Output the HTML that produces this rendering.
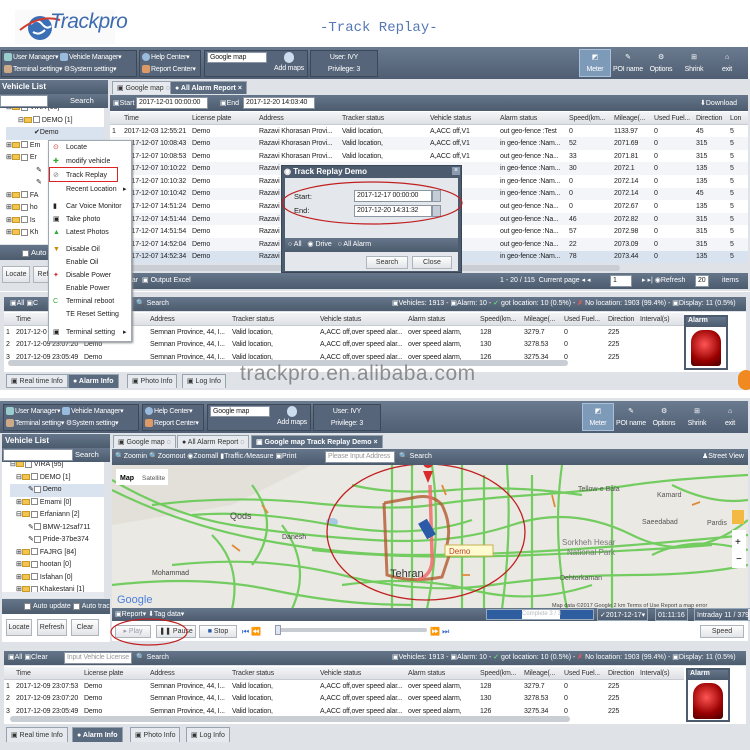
<!DOCTYPE html>
<html><head><meta charset="utf-8"><style>
*{box-sizing:border-box;margin:0;padding:0}
body{width:750px;height:750px;overflow:hidden;background:#fff;font-family:"Liberation Sans",sans-serif;font-size:8px;color:#222;position:relative}
.a{position:absolute}
.dk{background:linear-gradient(#66768a,#4c5b6e);color:#fff;white-space:nowrap}
.tb{background:linear-gradient(#6b7b8f,#4f5e72)}
.grp{position:absolute;border:1px solid #3b4858;background:#56657a;color:#fff;font-size:7px;line-height:12px;padding:1px 2px;white-space:nowrap;overflow:hidden;letter-spacing:-0.2px}
.ib{position:absolute;color:#fff;font-size:7px;text-align:center;white-space:nowrap;letter-spacing:-0.2px}
.hd{background:linear-gradient(#f4f5f7,#dde0e5);color:#333;border-bottom:1px solid #c8ccd2}
table{border-collapse:collapse;table-layout:fixed;position:absolute;font-size:7px;letter-spacing:-0.15px}
td{white-space:nowrap;overflow:hidden;padding:0 2px;height:12.6px}
.alt{background:#f3f5f8}
.sel{background:#d9e3ef}
.tab{position:absolute;height:13px;font-size:7px;line-height:13px;padding:0 4px;border:1px solid #98a3b0;border-bottom:none;background:#e6e9ed;color:#333;white-space:nowrap}
.tab.on{background:#5a6b80;color:#fff;font-weight:bold}
.btn{position:absolute;background:linear-gradient(#fdfdfd,#e2e4e8);border:1px solid #aeb4bc;font-size:7px;text-align:center;line-height:14px;color:#333;white-space:nowrap}
.inp{position:absolute;background:#fff;border:1px solid #8c96a2;font-size:7px;line-height:10px;padding-left:2px;color:#222;white-space:nowrap;overflow:hidden;letter-spacing:-0.2px}
.tree div{height:12.5px;line-height:12.5px;white-space:nowrap;font-size:7px}
.fd{display:inline-block;width:8px;height:6px;background:#f1c550;border:1px solid #c99a2a;vertical-align:middle;margin-right:1px}
.cb{display:inline-block;width:7px;height:7px;border:1px solid #888;background:#fff;vertical-align:middle;margin-right:2px}
.mi{height:13px;line-height:13px;padding-left:17px;font-size:7px;position:relative;white-space:nowrap}
.ic{display:inline-block;width:8px;height:8px;border-radius:2px;vertical-align:middle;margin-right:1px}
</style></head><body>

<!-- ===== TOP HALF ===== -->
<div class="a" style="left:15px;top:10px;width:100px;height:34px;background:#fafafa"></div>
<svg class="a" style="left:16px;top:10px" width="46" height="34"><ellipse cx="24" cy="18" rx="12" ry="12" fill="#3a6fb5"/><path d="M15 14q6-6 11 0t9 2M17 22q6 4 12-2" stroke="#fff" stroke-width="2" fill="none"/><path d="M4 20q20-16 40-10" stroke="#d23b2f" stroke-width="2" fill="none"/></svg>
<div class="a" style="left:50px;top:10px;font-size:21px;font-style:italic;color:#3d6bb0;letter-spacing:-0.5px">Trackpro</div>
<div class="a" style="left:320px;top:20px;font-size:14px;font-family:'Liberation Mono',monospace;color:#5578b5">-Track Replay-</div>

<div class="a tb" style="left:0;top:47px;width:748px;height:32px"></div>
<div class="grp" style="left:1px;top:50px;width:136px;height:27px"><span class="ic" style="background:#9cc"></span>User Manager▾ <span class="ic" style="background:#9bd"></span>Vehicle Manager▾<br><span class="ic" style="background:#ca8"></span>Terminal setting▾ ⚙System setting▾</div>
<div class="grp" style="left:139px;top:50px;width:62px;height:27px"><span class="ic" style="background:#9bd;border-radius:4px"></span>Help Center▾<br><span class="ic" style="background:#d96"></span>Report Center▾</div>
<div class="grp" style="left:204px;top:50px;width:104px;height:27px"></div>
<div class="inp" style="left:207px;top:52px;width:60px;height:11px">Google map</div>
<div class="a" style="left:284px;top:52px;width:10px;height:11px;border-radius:5px;background:#cde"></div>
<div class="ib" style="left:270px;top:65px;width:38px">Add maps</div>
<div class="grp" style="left:310px;top:50px;width:68px;height:27px;text-align:center">User: IVY<br>Privilege: 3</div>
<div class="a" style="left:579px;top:49px;width:32px;height:28px;background:#7d9ab8;border:1px solid #a8c0da"></div>
<div class="ib" style="left:579px;top:52px;width:32px;line-height:12px">◩<br>Meter</div>
<div class="ib" style="left:612px;top:52px;width:32px;line-height:12px">✎<br>POI name</div>
<div class="ib" style="left:646px;top:52px;width:30px;line-height:12px">⚙<br>Options</div>
<div class="ib" style="left:678px;top:52px;width:32px;line-height:12px">⊞<br>Shrink</div>
<div class="ib" style="left:712px;top:52px;width:30px;line-height:12px">⌂<br>exit</div>

<!-- left panel -->
<div class="a" style="left:0;top:79px;width:110px;height:212px;background:#dfe3e8"></div>
<div class="a dk" style="left:0;top:80px;width:108px;height:14px;font-weight:bold;line-height:14px;padding-left:2px;font-size:8px">Vehicle List</div>
<div class="a dk" style="left:0;top:94px;width:108px;height:14px"></div>
<div class="inp" style="left:0;top:95px;width:48px;height:12px"></div>
<div class="a" style="left:70px;top:96px;color:#fff;font-size:7.5px">Search</div>
<div class="a tree" style="left:0;top:108px;width:104px;height:136px;background:#fff;overflow:hidden;padding-left:6px">
<div style="margin-top:-6px">⊟<span class="fd"></span><span class="cb"></span>VIRA [95]</div>
<div style="padding-left:12px">⊟<span class="fd"></span><span class="cb"></span>DEMO [1]</div>
<div style="padding-left:28px;background:#d9e3ef">✔Demo</div>
<div>⊞<span class="fd"></span><span class="cb"></span>Em</div><div>⊞<span class="fd"></span><span class="cb"></span>Er</div>
<div style="padding-left:30px">✎</div><div style="padding-left:30px">✎</div>
<div>⊞<span class="fd"></span><span class="cb"></span>FA</div><div>⊞<span class="fd"></span><span class="cb"></span>ho</div><div>⊞<span class="fd"></span><span class="cb"></span>Is</div><div>⊞<span class="fd"></span><span class="cb"></span>Kh</div>
</div>
<div class="a dk" style="left:0;top:245px;width:108px;height:15px;font-size:7.5px;line-height:15px;padding-left:22px"><span class="cb"></span>Auto</div>
<div class="btn" style="left:2px;top:266px;width:28px;height:17px;line-height:16px">Locate</div>
<div class="btn" style="left:33px;top:266px;width:20px;height:17px;line-height:16px">Ref</div>

<!-- right area -->
<div class="a" style="left:110px;top:79px;width:640px;height:212px;background:#dfe3e8"></div>
<div class="tab" style="left:112px;top:81px">▣ Google map ◌</div>
<div class="tab on" style="left:170px;top:81px">● All Alarm Report ×</div>
<div class="a dk" style="left:110px;top:95px;width:638px;height:16px"></div>
<div class="a" style="left:113px;top:99px;color:#fff;font-size:7px">▣Start</div>
<div class="inp" style="left:136px;top:97px;width:72px;height:12px">2017-12-01 00:00:00</div>
<div class="a" style="left:220px;top:99px;color:#fff;font-size:7px">▣End</div>
<div class="inp" style="left:243px;top:97px;width:72px;height:12px">2017-12-20 14:03:40</div>
<div class="a" style="left:700px;top:99px;color:#fff;font-size:7px">⬇Download</div>
<div class="a" style="left:110px;top:111px;width:638px;height:152px;background:#fff"></div>
<table style="left:110px;top:112px;width:638px">
<colgroup><col style="width:12px"><col style="width:68px"><col style="width:67px"><col style="width:83px"><col style="width:88px"><col style="width:70px"><col style="width:69px"><col style="width:45px"><col style="width:40px"><col style="width:42px"><col style="width:34px"><col style="width:20px"></colgroup>
<tr class="hd"><td></td><td>Time</td><td>License plate</td><td>Address</td><td>Tracker status</td><td>Vehicle status</td><td>Alarm status</td><td>Speed(km...</td><td>Mileage(...</td><td>Used Fuel...</td><td>Direction</td><td>Lon</td></tr>
<tr><td>1</td><td>2017-12-03 12:55:21</td><td>Demo</td><td>Razavi Khorasan Provi...</td><td>Valid location,</td><td>A,ACC off,V1</td><td>out geo-fence :Test</td><td>0</td><td>1133.97</td><td>0</td><td>45</td><td>5</td></tr>
<tr class="alt"><td>2</td><td>2017-12-07 10:08:43</td><td>Demo</td><td>Razavi Khorasan Provi...</td><td>Valid location,</td><td>A,ACC off,V1</td><td>in geo-fence :Nam...</td><td>52</td><td>2071.69</td><td>0</td><td>315</td><td>5</td></tr>
<tr><td>3</td><td>2017-12-07 10:08:53</td><td>Demo</td><td>Razavi Khorasan Provi...</td><td>Valid location,</td><td>A,ACC off,V1</td><td>out geo-fence :Na...</td><td>33</td><td>2071.81</td><td>0</td><td>315</td><td>5</td></tr>
<tr class="alt"><td>4</td><td>2017-12-07 10:10:22</td><td>Demo</td><td>Razavi</td><td></td><td>,V1</td><td>in geo-fence :Nam...</td><td>30</td><td>2072.1</td><td>0</td><td>135</td><td>5</td></tr>
<tr><td>5</td><td>2017-12-07 10:10:32</td><td>Demo</td><td>Razavi</td><td></td><td>,V1</td><td>in geo-fence :Nam...</td><td>0</td><td>2072.14</td><td>0</td><td>135</td><td>5</td></tr>
<tr class="alt"><td>6</td><td>2017-12-07 10:10:42</td><td>Demo</td><td>Razavi</td><td></td><td>,V1</td><td>in geo-fence :Nam...</td><td>0</td><td>2072.14</td><td>0</td><td>45</td><td>5</td></tr>
<tr><td>7</td><td>2017-12-07 14:51:24</td><td>Demo</td><td>Razavi</td><td></td><td>,V1</td><td>out geo-fence :Na...</td><td>0</td><td>2072.67</td><td>0</td><td>135</td><td>5</td></tr>
<tr class="alt"><td>8</td><td>2017-12-07 14:51:44</td><td>Demo</td><td>Razavi</td><td></td><td>,V1</td><td>out geo-fence :Na...</td><td>46</td><td>2072.82</td><td>0</td><td>315</td><td>5</td></tr>
<tr><td>9</td><td>2017-12-07 14:51:54</td><td>Demo</td><td>Razavi</td><td></td><td>,V1</td><td>out geo-fence :Na...</td><td>57</td><td>2072.98</td><td>0</td><td>315</td><td>5</td></tr>
<tr class="alt"><td>10</td><td>2017-12-07 14:52:04</td><td>Demo</td><td>Razavi</td><td></td><td>,V1</td><td>out geo-fence :Na...</td><td>22</td><td>2073.09</td><td>0</td><td>315</td><td>5</td></tr>
<tr class="sel"><td>11</td><td>2017-12-07 14:52:34</td><td>Demo</td><td>Razavi</td><td></td><td>,V1</td><td>in geo-fence :Nam...</td><td>78</td><td>2073.44</td><td>0</td><td>135</td><td>5</td></tr>
</table>
<div class="a" style="left:130px;top:265px;width:490px;height:6px;background:#c9ced5;border-radius:3px"></div>
<div class="a dk" style="left:110px;top:273px;width:638px;height:16px;font-size:7px;line-height:16px">
<span style="position:absolute;left:18px">ear &nbsp;▣ Output Excel</span>
<span style="position:absolute;left:390px">1 - 20 / 115 &nbsp;Current page ◂ ◂</span>
<span class="inp" style="left:500px;top:2px;width:22px;height:12px">1</span>
<span style="position:absolute;left:532px">▸ ▸| ◉Refresh</span>
<span class="inp" style="left:585px;top:2px;width:14px;height:12px">20</span>
<span style="position:absolute;left:612px">items</span></div>

<!-- lower grid top -->
<div class="a" style="left:0;top:292px;width:750px;height:98px;background:#dfe3e8"></div>
<div class="a dk" style="left:4px;top:297px;width:742px;height:14px;font-size:7px;line-height:14px">
<span style="position:absolute;left:6px">▣All ▣C</span><span style="position:absolute;left:132px">🔍 Search</span>
<span style="position:absolute;left:388px">▣Vehicles: 1913 - ▣Alarm: 10 - <span style="color:#6f6">✓</span> got location: 10 (0.5%) - <span style="color:#f55">✗</span> No location: 1903 (99.4%) - ▣Display: 11 (0.5%)</span></div>
<div class="a" style="left:4px;top:312px;width:742px;height:60px;background:#fff"></div>
<table style="left:4px;top:313px;width:680px">
<colgroup><col style="width:10px"><col style="width:68px"><col style="width:66px"><col style="width:82px"><col style="width:88px"><col style="width:88px"><col style="width:72px"><col style="width:44px"><col style="width:40px"><col style="width:44px"><col style="width:32px"><col style="width:46px"></colgroup>
<tr class="hd"><td></td><td>Time</td><td>License plate</td><td>Address</td><td>Tracker status</td><td>Vehicle status</td><td>Alarm status</td><td>Speed(km...</td><td>Mileage(...</td><td>Used Fuel...</td><td>Direction</td><td>Interval(s)</td></tr>
<tr><td>1</td><td>2017-12-0</td><td></td><td>Semnan Province, 44, I...</td><td>Valid location,</td><td>A,ACC off,over speed alar...</td><td>over speed alarm,</td><td>128</td><td>3279.7</td><td>0</td><td>225</td><td></td></tr>
<tr><td>2</td><td>2017-12-09 23:07:20</td><td>Demo</td><td>Semnan Province, 44, I...</td><td>Valid location,</td><td>A,ACC off,over speed alar...</td><td>over speed alarm,</td><td>130</td><td>3278.53</td><td>0</td><td>225</td><td></td></tr>
<tr><td>3</td><td>2017-12-09 23:05:49</td><td>Demo</td><td>Semnan Province, 44, I...</td><td>Valid location,</td><td>A,ACC off,over speed alar...</td><td>over speed alarm,</td><td>126</td><td>3275.34</td><td>0</td><td>225</td><td></td></tr>
</table>
<div class="a" style="left:684px;top:315px;width:44px;height:55px;background:#fff;border:2px solid #4c5b6e"></div>
<div class="a dk" style="left:686px;top:317px;width:40px;height:10px;font-size:7px;font-weight:bold;padding-left:2px">Alarm</div>
<div class="a" style="left:691px;top:330px;width:30px;height:36px;border-radius:12px 12px 3px 3px;background:radial-gradient(circle at 45% 40%,#f55,#900 60%,#400)"></div>
<div class="a" style="left:8px;top:360px;width:560px;height:6px;background:#c9ced5;border-radius:3px"></div>
<div class="tab" style="left:6px;top:374px;height:14px;border-bottom:1px solid #98a3b0">▣ Real time Info</div>
<div class="tab on" style="left:68px;top:374px;height:14px">● Alarm Info</div>
<div class="tab" style="left:127px;top:374px;height:14px">▣ Photo Info</div>
<div class="tab" style="left:182px;top:374px;height:14px">▣ Log Info</div>
<div class="a" style="left:240px;top:362px;font-size:21px;color:rgba(110,110,110,.75);letter-spacing:0.5px">trackpro.en.alibaba.com</div>
<div class="a" style="left:738px;top:370px;width:16px;height:20px;border-radius:8px;background:#f08a20"></div>

<!-- context menu -->
<div class="a" style="left:48px;top:140px;width:84px;height:202px;background:#fff;border:1px solid #a0a8b2;box-shadow:1px 1px 2px #888">
<div class="mi"><span style="position:absolute;left:4px;color:#c33">⊙</span>Locate</div>
<div class="mi" style="margin-top:1px"><span style="position:absolute;left:4px;color:#3a3">✚</span>modify vehicle</div>
<div class="mi" style="margin-top:1px"><span style="position:absolute;left:4px;color:#777">⊘</span>Track Replay</div>
<div class="mi" style="margin-top:1px">Recent Location<span style="position:absolute;left:74px">▸</span></div>
<div class="mi" style="margin-top:4px"><span style="position:absolute;left:4px">▮</span>Car Voice Monitor</div>
<div class="mi" style="margin-top:0px"><span style="position:absolute;left:4px">▣</span>Take photo</div>
<div class="mi"><span style="position:absolute;left:4px;color:#3a3">▲</span>Latest Photos</div>
<div class="mi" style="margin-top:4px"><span style="position:absolute;left:4px;color:#c80">▼</span>Disable Oil</div>
<div class="mi">Enable Oil</div>
<div class="mi"><span style="position:absolute;left:4px;color:#c33">✦</span>Disable Power</div>
<div class="mi">Enable Power</div>
<div class="mi"><span style="position:absolute;left:4px;color:#3a3">C</span>Terminal reboot</div>
<div class="mi">TE Reset Setting</div>
<div class="mi" style="margin-top:5px"><span style="position:absolute;left:4px">▣</span>Terminal setting<span style="position:absolute;left:74px">▸</span></div>
</div>
<div class="a" style="left:49px;top:167px;width:69px;height:15px;border:1.5px solid #d22"></div>

<!-- dialog -->
<div class="a" style="left:281px;top:165px;width:181px;height:108px;background:#4c5b6e;border:1px solid #3a4656"></div>
<div class="a" style="left:284px;top:167px;color:#fff;font-size:8px;font-weight:bold">◉ Track Replay Demo</div>
<div class="a" style="left:452px;top:167px;width:8px;height:8px;background:#8a9bb0;color:#fff;font-size:7px;line-height:8px;text-align:center">×</div>
<div class="a" style="left:285px;top:178px;width:173px;height:60px;background:#e4e7eb"></div>
<div class="a" style="left:294px;top:192px;font-size:7.5px">Start:</div>
<div class="a" style="left:294px;top:206px;font-size:7.5px">End:</div>
<div class="inp" style="left:354px;top:190px;width:78px;height:12px">2017-12-17 00:00:00</div>
<div class="inp" style="left:354px;top:205px;width:78px;height:12px">2017-12-20 14:31:32</div>
<div class="a" style="left:432px;top:190px;width:9px;height:12px;background:#c5ced8;border:1px solid #8c96a2"></div>
<div class="a" style="left:432px;top:205px;width:9px;height:12px;background:#c5ced8;border:1px solid #8c96a2"></div>
<svg class="a" style="left:280px;top:178px" width="190" height="52"><ellipse cx="92" cy="25" rx="90" ry="21" fill="none" stroke="#c02020" stroke-width="1.2"/></svg>
<div class="a dk" style="left:285px;top:238px;width:173px;height:14px;font-size:7px;line-height:14px;padding-left:3px">○ All &nbsp; ◉ Drive &nbsp; ○ All Alarm</div>
<div class="a" style="left:285px;top:252px;width:173px;height:19px;background:#e4e7eb"></div>
<div class="btn" style="left:366px;top:256px;width:42px;height:13px;line-height:12px">Search</div>
<div class="btn" style="left:412px;top:256px;width:40px;height:13px;line-height:12px">Close</div>

<!-- ===== BOTTOM HALF ===== -->
<div class="a" style="left:0;top:398px;width:750px;height:352px;background:#dfe3e8"></div>
<div class="a tb" style="left:0;top:401px;width:748px;height:32px"></div>
<div class="grp" style="left:3px;top:404px;width:136px;height:27px"><span class="ic" style="background:#9cc"></span>User Manager▾ <span class="ic" style="background:#9bd"></span>Vehicle Manager▾<br><span class="ic" style="background:#ca8"></span>Terminal setting▾ ⚙System setting▾</div>
<div class="grp" style="left:142px;top:404px;width:62px;height:27px"><span class="ic" style="background:#9bd;border-radius:4px"></span>Help Center▾<br><span class="ic" style="background:#d96"></span>Report Center▾</div>
<div class="grp" style="left:207px;top:404px;width:104px;height:27px"></div>
<div class="inp" style="left:210px;top:406px;width:60px;height:11px">Google map</div>
<div class="a" style="left:287px;top:406px;width:10px;height:11px;border-radius:5px;background:#cde"></div>
<div class="ib" style="left:273px;top:419px;width:38px">Add maps</div>
<div class="grp" style="left:313px;top:404px;width:68px;height:27px;text-align:center">User: IVY<br>Privilege: 3</div>
<div class="a" style="left:582px;top:403px;width:32px;height:28px;background:#7d9ab8;border:1px solid #a8c0da"></div>
<div class="ib" style="left:582px;top:406px;width:32px;line-height:12px">◩<br>Meter</div>
<div class="ib" style="left:615px;top:406px;width:32px;line-height:12px">✎<br>POI name</div>
<div class="ib" style="left:649px;top:406px;width:30px;line-height:12px">⚙<br>Options</div>
<div class="ib" style="left:681px;top:406px;width:32px;line-height:12px">⊞<br>Shrink</div>
<div class="ib" style="left:715px;top:406px;width:30px;line-height:12px">⌂<br>exit</div>

<div class="a dk" style="left:2px;top:434px;width:108px;height:14px;font-weight:bold;line-height:14px;padding-left:3px;font-size:8px">Vehicle List</div>
<div class="a dk" style="left:2px;top:448px;width:108px;height:14px"></div>
<div class="inp" style="left:3px;top:449px;width:70px;height:12px"></div>
<div class="a" style="left:75px;top:450px;color:#fff;font-size:7.5px">Search</div>
<div class="a tree" style="left:2px;top:462px;width:102px;height:130px;background:#fff;overflow:hidden;padding-left:8px">
<div style="margin-top:-3px">⊟<span class="fd"></span><span class="cb"></span>VIRA [95]</div>
<div style="padding-left:6px">⊟<span class="fd"></span><span class="cb"></span>DEMO [1]</div>
<div style="padding-left:18px;background:#d9e3ef">✎<span class="cb"></span>Demo</div>
<div style="padding-left:6px">⊞<span class="fd"></span><span class="cb"></span>Emami [0]</div>
<div style="padding-left:6px">⊟<span class="fd"></span><span class="cb"></span>Erfaniann [2]</div>
<div style="padding-left:18px">✎<span class="cb"></span>BMW-12saf711</div>
<div style="padding-left:18px">✎<span class="cb"></span>Pride-37be374</div>
<div style="padding-left:6px">⊞<span class="fd"></span><span class="cb"></span>FAJRG [84]</div>
<div style="padding-left:6px">⊞<span class="fd"></span><span class="cb"></span>hootan [0]</div>
<div style="padding-left:6px">⊞<span class="fd"></span><span class="cb"></span>Isfahan [0]</div>
<div style="padding-left:6px">⊞<span class="fd"></span><span class="cb"></span>Khakestani [1]</div>
<div style="padding-left:6px">⊞<span class="fd"></span><span class="cb"></span>Pilot [0]</div>
</div>
<div class="a" style="left:2px;top:592px;width:102px;height:6px;background:#e6e9ed"></div>
<div class="a dk" style="left:2px;top:599px;width:108px;height:15px;font-size:7px;line-height:15px;padding-left:22px;overflow:hidden"><span class="cb"></span>Auto update <span class="cb"></span>Auto track</div>
<div class="a" style="left:2px;top:614px;width:108px;height:28px;background:#fff"></div>
<div class="btn" style="left:6px;top:619px;width:26px;height:17px;line-height:16px">Locate</div>
<div class="btn" style="left:37px;top:619px;width:30px;height:17px;line-height:16px">Refresh</div>
<div class="btn" style="left:71px;top:619px;width:28px;height:17px;line-height:16px">Clear</div>

<div class="tab" style="left:113px;top:435px">▣ Google map ◌</div>
<div class="tab" style="left:177px;top:435px">● All Alarm Report ◌</div>
<div class="tab on" style="left:251px;top:435px">▣ Google map Track Replay Demo ×</div>
<div class="a dk" style="left:112px;top:449px;width:636px;height:16px;font-size:7px;line-height:16px">
<span style="position:absolute;left:3px">🔍Zoomin 🔍Zoomout ◉Zoomall ▮Traffic ⁄Measure ▣Print</span>
<span class="inp" style="left:213px;top:2px;width:70px;height:12px;color:#999">Please Input Address</span>
<span style="position:absolute;left:287px">🔍 Search</span><span style="position:absolute;left:590px">♟Street View</span></div>

<!-- map -->
<svg class="a" style="left:112px;top:465px" width="636" height="144" viewBox="0 0 636 144">
<rect width="636" height="144" fill="#ebe9e3"/>
<path d="M0 0h200l-80 40L0 60z" fill="#e2e0d8"/>
<ellipse cx="220" cy="57" rx="6" ry="4" fill="#a8c8e8"/>
<g fill="none" stroke="#6ccb5a" stroke-width="2.2" opacity=".95">
<path d="M0 15Q60 50 120 60T260 75T400 60T520 70T636 55"/>
<path d="M0 25Q70 60 150 75T300 90T450 85T636 70"/>
<path d="M40 40Q120 30 200 38T320 40T420 30T520 20T636 10"/>
<path d="M60 100Q150 90 230 110T380 120T520 110T636 100"/>
<path d="M0 120Q90 110 160 125T300 140"/>
<path d="M80 50Q140 45 220 60T360 55"/>
<path d="M280 0V144M300 0V144M320 0Q330 70 315 144M350 0V144M372 10V144M395 0Q400 70 390 144M420 10V144M450 0Q440 70 455 144M500 20V144"/>
<path d="M240 20Q280 30 340 25T470 30M230 120Q300 110 360 125T480 120M200 85Q300 95 420 90T600 80M560 20Q600 40 636 35M540 90Q580 70 636 85"/>
<path d="M140 20Q170 60 140 100M100 70Q130 100 120 144M170 60Q200 100 180 144"/>
</g>
<g fill="none" stroke="#e08a3a" stroke-width="1.8"><path d="M150 40l6 8M120 80l8 6M330 20l4 10M440 30l3 12M350 110l8 0M580 40l8 -3"/></g>
<path d="M272 38L275 110Q300 118 330 112L340 82" fill="none" stroke="#b35a30" stroke-width="3" opacity=".8"/>
<path d="M272 38L300 33Q320 28 330 40Q340 60 335 80" fill="none" stroke="#b35a30" stroke-width="3" opacity=".8"/>
<path d="M318 20L320 90Q322 110 305 115" fill="none" stroke="#f06a6a" stroke-width="3.5" opacity=".85"/>
<path d="M316 3a5 5 0 1 1 .1 0M311 6l5 12 5-12" fill="#d92b2b"/>
<rect x="310" y="55" width="10" height="18" fill="#2a5aa8" transform="rotate(-30 315 64)"/>
<rect x="333" y="80" width="48" height="11" fill="#fffbd0" stroke="#c8b050"/>
<text x="337" y="89" font-size="8" font-family="Liberation Sans" fill="#c04030">Demo</text>
<text x="278" y="112" font-size="11" font-family="Liberation Sans" fill="#333">Tehran</text>
<text x="118" y="54" font-size="9" font-family="Liberation Sans" fill="#444">Qods</text>
<text x="170" y="74" font-size="7" font-family="Liberation Sans" fill="#444">Danesh</text>
<text x="40" y="110" font-size="7" font-family="Liberation Sans" fill="#444">Mohammad</text>
<text x="466" y="26" font-size="7" font-family="Liberation Sans" fill="#555">Tellow-e Bala</text>
<text x="545" y="32" font-size="7" font-family="Liberation Sans" fill="#555">Kamard</text>
<text x="530" y="59" font-size="7" font-family="Liberation Sans" fill="#555">Saeedabad</text>
<text x="595" y="60" font-size="7" font-family="Liberation Sans" fill="#555">Pardis</text>
<text x="450" y="80" font-size="8" font-family="Liberation Sans" fill="#777">Sorkheh Hesar</text>
<text x="455" y="90" font-size="8" font-family="Liberation Sans" fill="#777">National Park</text>
<text x="448" y="115" font-size="7" font-family="Liberation Sans" fill="#555">Dehtorkaman</text>
<text x="5" y="138" font-size="11" font-family="Liberation Sans" fill="#4a7fdc">Google</text>
<text x="440" y="142" font-size="5.5" font-family="Liberation Sans" fill="#444">Map data ©2017 Google  2 km      Terms of Use  Report a map error</text>
<ellipse cx="314" cy="67" rx="99" ry="68" fill="none" stroke="#c02020" stroke-width="1.3"/>
<rect x="4" y="4" width="52" height="16" fill="#fff"/>
<text x="8" y="15" font-size="7" font-weight="bold" font-family="Liberation Sans">Map</text>
<text x="30" y="15" font-size="6.5" font-family="Liberation Sans" fill="#555">Satellite</text>
<rect x="620" y="65" width="14" height="38" fill="#fff"/>
<text x="623" y="80" font-size="10" font-family="Liberation Sans">+</text><text x="624" y="97" font-size="10" font-family="Liberation Sans">−</text>
<rect x="620" y="45" width="12" height="14" fill="#f4b942"/>
</svg>
<div class="a dk" style="left:112px;top:608px;width:636px;height:13px;font-size:7px;line-height:13px">
<span style="position:absolute;left:3px">▣Report▾ ⬇Tag data▾</span>
<span style="position:absolute;left:374px;top:1px;width:108px;height:11px;background:#2f5ea0;border:1px solid #9ab"></span>
<span style="position:absolute;left:410px;top:2px;width:38px;height:9px;background:#fff;color:#bbb;line-height:9px;font-size:6px;text-align:center">Complete 3 / 3</span>
<span style="position:absolute;left:485px;border:1px solid #9ab;height:13px;padding:0 2px">✓2017-12-17▾</span>
<span style="position:absolute;left:543px;border:1px solid #9ab;height:13px;padding:0 2px">01:11:16</span>
<span style="position:absolute;left:582px;border:1px solid #9ab;height:13px;padding:0 2px">Intraday 11 / 379</span></div>
<div class="a" style="left:112px;top:621px;width:636px;height:20px;background:#fff"></div>
<div class="btn" style="left:115px;top:625px;width:36px;height:13px;line-height:12px;color:#99a">▸ Play</div>
<div class="btn" style="left:156px;top:625px;width:40px;height:13px;line-height:12px">❚❚ Pause</div>
<div class="btn" style="left:199px;top:625px;width:38px;height:13px;line-height:12px"><span style="color:#2a5aa8">■</span> Stop</div>
<div class="a" style="left:242px;top:627px;color:#36c;font-size:8px">⏮ ⏪</div>
<div class="a" style="left:275px;top:628px;width:152px;height:4px;background:#c7ccd2;border-radius:2px"></div>
<div class="a" style="left:275px;top:625px;width:6px;height:10px;background:#dde7f3;border:1px solid #99a"></div>
<div class="a" style="left:430px;top:627px;color:#36c;font-size:8px">⏩ ⏭</div>
<div class="btn" style="left:700px;top:625px;width:44px;height:13px;line-height:12px">Speed</div>
<svg class="a" style="left:110px;top:618px" width="80" height="30"><ellipse cx="39" cy="14" rx="38" ry="13" fill="none" stroke="#c02020" stroke-width="1.2"/></svg>

<!-- lower grid bottom -->
<div class="a dk" style="left:4px;top:651px;width:742px;height:14px;font-size:7px;line-height:14px">
<span style="position:absolute;left:4px">▣All ▣Clear</span>
<span class="inp" style="left:60px;top:1px;width:68px;height:12px;color:#999">Input Vehicle License</span>
<span style="position:absolute;left:132px">🔍 Search</span>
<span style="position:absolute;left:388px">▣Vehicles: 1913 - ▣Alarm: 10 - <span style="color:#6f6">✓</span> got location: 10 (0.5%) - <span style="color:#f55">✗</span> No location: 1903 (99.4%) - ▣Display: 11 (0.5%)</span></div>
<div class="a" style="left:4px;top:666px;width:742px;height:58px;background:#fff"></div>
<table style="left:4px;top:667px;width:680px">
<colgroup><col style="width:10px"><col style="width:68px"><col style="width:66px"><col style="width:82px"><col style="width:88px"><col style="width:88px"><col style="width:72px"><col style="width:44px"><col style="width:40px"><col style="width:44px"><col style="width:32px"><col style="width:46px"></colgroup>
<tr class="hd"><td></td><td>Time</td><td>License plate</td><td>Address</td><td>Tracker status</td><td>Vehicle status</td><td>Alarm status</td><td>Speed(km...</td><td>Mileage(...</td><td>Used Fuel...</td><td>Direction</td><td>Interval(s)</td></tr>
<tr><td>1</td><td>2017-12-09 23:07:53</td><td>Demo</td><td>Semnan Province, 44, I...</td><td>Valid location,</td><td>A,ACC off,over speed alar...</td><td>over speed alarm,</td><td>128</td><td>3279.7</td><td>0</td><td>225</td><td></td></tr>
<tr><td>2</td><td>2017-12-09 23:07:20</td><td>Demo</td><td>Semnan Province, 44, I...</td><td>Valid location,</td><td>A,ACC off,over speed alar...</td><td>over speed alarm,</td><td>130</td><td>3278.53</td><td>0</td><td>225</td><td></td></tr>
<tr><td>3</td><td>2017-12-09 23:05:49</td><td>Demo</td><td>Semnan Province, 44, I...</td><td>Valid location,</td><td>A,ACC off,over speed alar...</td><td>over speed alarm,</td><td>126</td><td>3275.34</td><td>0</td><td>225</td><td></td></tr>
</table>
<div class="a" style="left:686px;top:668px;width:44px;height:54px;background:#fff;border:2px solid #4c5b6e"></div>
<div class="a dk" style="left:688px;top:670px;width:40px;height:10px;font-size:7px;font-weight:bold;padding-left:2px">Alarm</div>
<div class="a" style="left:693px;top:683px;width:30px;height:36px;border-radius:12px 12px 3px 3px;background:radial-gradient(circle at 45% 40%,#f55,#900 60%,#400)"></div>
<div class="a" style="left:10px;top:716px;width:560px;height:6px;background:#c9ced5;border-radius:3px"></div>
<div class="tab" style="left:6px;top:727px;height:15px;line-height:15px">▣ Real time Info</div>
<div class="tab on" style="left:72px;top:727px;height:15px;line-height:15px">● Alarm Info</div>
<div class="tab" style="left:130px;top:727px;height:15px;line-height:15px">▣ Photo Info</div>
<div class="tab" style="left:186px;top:727px;height:15px;line-height:15px">▣ Log Info</div>
</body></html>
